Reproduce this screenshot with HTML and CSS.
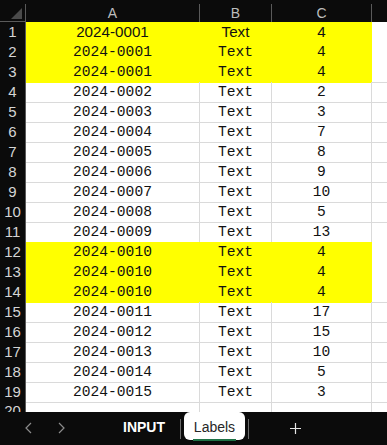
FILE: index.html
```html
<!DOCTYPE html>
<html>

<head>
    <title>Labels</title>
    <link rel="stylesheet" href="styles.css">
</head>

<body>
    <div class="sheet">
        <div class="top-strip"></div>
        <div class="row head">
            <div class="corner"><span class="tri"></span></div>
            <div class="col-head">A</div>
            <div class="col-head">B</div>
            <div class="col-head">C</div>
            <div class="col-head last"></div>
        </div>

        <div class="row hl sans">
            <div class="num">1</div><div class="cell">2024-0001</div><div class="cell">Text</div><div class="cell">4</div><div class="cell blank"></div>
        </div>
        <div class="row hl">
            <div class="num">2</div><div class="cell">2024-0001</div><div class="cell">Text</div><div class="cell">4</div><div class="cell blank"></div>
        </div>
        <div class="row hl">
            <div class="num">3</div><div class="cell">2024-0001</div><div class="cell">Text</div><div class="cell">4</div><div class="cell blank"></div>
        </div>
        <div class="row">
            <div class="num">4</div><div class="cell">2024-0002</div><div class="cell">Text</div><div class="cell">2</div><div class="cell blank"></div>
        </div>
        <div class="row">
            <div class="num">5</div><div class="cell">2024-0003</div><div class="cell">Text</div><div class="cell">3</div><div class="cell blank"></div>
        </div>
        <div class="row">
            <div class="num">6</div><div class="cell">2024-0004</div><div class="cell">Text</div><div class="cell">7</div><div class="cell blank"></div>
        </div>
        <div class="row">
            <div class="num">7</div><div class="cell">2024-0005</div><div class="cell">Text</div><div class="cell">8</div><div class="cell blank"></div>
        </div>
        <div class="row">
            <div class="num">8</div><div class="cell">2024-0006</div><div class="cell">Text</div><div class="cell">9</div><div class="cell blank"></div>
        </div>
        <div class="row">
            <div class="num">9</div><div class="cell">2024-0007</div><div class="cell">Text</div><div class="cell">10</div><div class="cell blank"></div>
        </div>
        <div class="row">
            <div class="num">10</div><div class="cell">2024-0008</div><div class="cell">Text</div><div class="cell">5</div><div class="cell blank"></div>
        </div>
        <div class="row">
            <div class="num">11</div><div class="cell">2024-0009</div><div class="cell">Text</div><div class="cell">13</div><div class="cell blank"></div>
        </div>
        <div class="row hl">
            <div class="num">12</div><div class="cell">2024-0010</div><div class="cell">Text</div><div class="cell">4</div><div class="cell blank"></div>
        </div>
        <div class="row hl">
            <div class="num">13</div><div class="cell">2024-0010</div><div class="cell">Text</div><div class="cell">4</div><div class="cell blank"></div>
        </div>
        <div class="row hl">
            <div class="num">14</div><div class="cell">2024-0010</div><div class="cell">Text</div><div class="cell">4</div><div class="cell blank"></div>
        </div>
        <div class="row">
            <div class="num">15</div><div class="cell">2024-0011</div><div class="cell">Text</div><div class="cell">17</div><div class="cell blank"></div>
        </div>
        <div class="row">
            <div class="num">16</div><div class="cell">2024-0012</div><div class="cell">Text</div><div class="cell">15</div><div class="cell blank"></div>
        </div>
        <div class="row">
            <div class="num">17</div><div class="cell">2024-0013</div><div class="cell">Text</div><div class="cell">10</div><div class="cell blank"></div>
        </div>
        <div class="row">
            <div class="num">18</div><div class="cell">2024-0014</div><div class="cell">Text</div><div class="cell">5</div><div class="cell blank"></div>
        </div>
        <div class="row">
            <div class="num">19</div><div class="cell">2024-0015</div><div class="cell">Text</div><div class="cell">3</div><div class="cell blank"></div>
        </div>
        <div class="row last-row">
            <div class="num">20</div><div class="cell"></div><div class="cell"></div><div class="cell"></div><div class="cell blank"></div>
        </div>
    </div>

    <div class="tabbar">
        <svg class="nav prev" width="7" height="12" viewBox="0 0 7 12">
            <path d="M6 1 L1 6 L6 11" fill="none" stroke="#8c8c8c" stroke-width="1.2"/>
        </svg>
        <svg class="nav next" width="7" height="12" viewBox="0 0 7 12">
            <path d="M1 1 L6 6 L1 11" fill="none" stroke="#8c8c8c" stroke-width="1.2"/>
        </svg>
        <span class="tab input">INPUT</span>
        <span class="sep"></span>
        <span class="tab active"><span class="tab-label">Labels</span></span>
        <span class="sep"></span>
        <svg class="add" width="11" height="11" viewBox="0 0 11 11">
            <path d="M5.5 0 V11 M0 5.5 H11" stroke="#e6e6e6" stroke-width="1.2"/>
        </svg>
    </div>
</body>

</html>
```

FILE: styles.css
```css
body {
    margin: 0;
    background-color: #0b0b0b;
    font-family: "Liberation Sans", Arial, sans-serif;
}

.sheet {
    height: 412px;
    overflow: hidden;
    background-color: #ffffff;
}

.top-strip {
    height: 4px;
    background-color: #0b0b0b;
}

.row {
    display: grid;
    grid-template-columns: 26px 174px 72px 100px 1fr;
    height: 20px;
}

.row.head {
    height: 18px;
    background-color: #0b0b0b;
}

.corner {
    position: relative;
    border-right: 1px solid #5a5a5a;
    border-bottom: 1px solid #5a5a5a;
}

.tri {
    position: absolute;
    left: 11px;
    top: 4px;
    width: 0;
    height: 0;
    border-left: 11px solid transparent;
    border-bottom: 11px solid #4a4a4a;
}

.col-head {
    border-right: 1px solid #5a5a5a;
    color: #bdbdbd;
    font-size: 14px;
    line-height: 18px;
    text-align: center;
}

.col-head.last {
    border-right: none;
}

.num {
    background-color: #0b0b0b;
    border-right: 1px solid #5a5a5a;
    border-bottom: 1px solid #5a5a5a;
    color: #d4d4d4;
    font-size: 15px;
    line-height: 20px;
    text-align: center;
}

.last-row .num {
    line-height: 18px;
}

.cell {
    border-right: 1px solid #dadada;
    border-bottom: 1px solid #dadada;
    color: #111111;
    font-family: "Liberation Mono", "Courier New", monospace;
    font-size: 14.6px;
    line-height: 20px;
    text-align: center;
    white-space: nowrap;
}

.cell.blank {
    border-right: none;
}

.hl .cell {
    background-color: #ffff00;
    border-color: #ffff00;
}

.hl .cell.blank {
    background-color: #ffffff;
    border-bottom-color: #dadada;
}

.sans .cell {
    font-family: "Liberation Sans", Arial, sans-serif;
    font-size: 15.2px;
}

.tabbar {
    display: flex;
    align-items: flex-start;
    height: 33px;
    background-color: #0b0b0b;
    color: #ffffff;
}

.nav {
    margin-top: 10px;
}

.nav.prev {
    margin-left: 25px;
}

.nav.next {
    margin-left: 26px;
}

.tab {
    height: 28px;
    line-height: 30px;
    font-size: 14px;
}

.tab.input {
    margin-left: 58px;
    margin-right: 15px;
    font-weight: bold;
}

.sep {
    width: 1px;
    height: 20px;
    margin-top: 7px;
    background-color: #6a6a6a;
}

.tab.active {
    width: 61px;
    margin: 0 3px;
    background-color: #ffffff;
    border-radius: 6px;
    color: #262626;
    text-align: center;
}

.tab-label {
    display: inline-block;
    line-height: 24px;
    border-bottom: 2px solid #1e7145;
    padding: 0 1px;
}

.add {
    margin-left: 41px;
    margin-top: 11px;
}
```
